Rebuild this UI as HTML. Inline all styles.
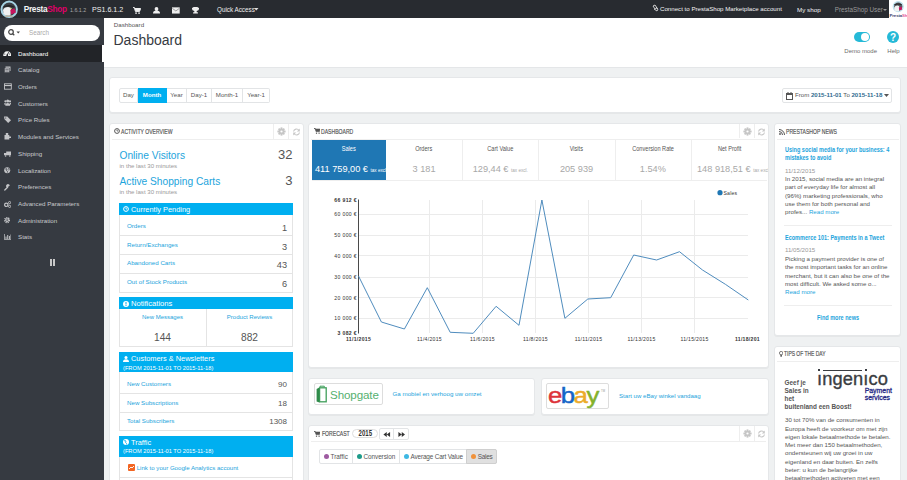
<!DOCTYPE html>
<html><head><meta charset="utf-8">
<style>
*{margin:0;padding:0;box-sizing:border-box}
html,body{width:907px;height:480px;overflow:hidden;background:#eff1f2;font-family:"Liberation Sans",sans-serif;color:#555}
.a{position:absolute;white-space:nowrap}
.panel{position:absolute;background:#fff;border:1px solid #e5e7e9;border-radius:3px;box-shadow:0 1px 0 rgba(0,0,0,.04)}
.cond{display:inline-block;transform:scaleX(.67);transform-origin:0 50%;font-size:7.6px;-webkit-text-stroke:.2px #555;color:#555}
.cnd{display:inline-block;transform:scaleX(.69);transform-origin:0 50%;font-weight:bold}
.cc{display:inline-block;transform:scaleX(.8);transform-origin:50% 50%}
.hl{position:absolute;height:1px;background:#eee}
.vl{position:absolute;width:1px;background:#eee}
.lnk{color:#1ca4dc}
.si{position:absolute;left:18px;font-size:6.2px;color:#c9cacd;line-height:8px;white-space:nowrap}
.tb{position:absolute;top:4px;font-size:6.4px;color:#e6e6e6;line-height:9px;white-space:nowrap}
.btn{position:absolute;top:88px;height:15px;border:1px solid #e2e4e6;border-left:none;font-size:6.1px;color:#555;line-height:11.8px;text-align:center;background:#fff}
.pt{position:absolute;font-size:7px;color:#555;line-height:9px;white-space:nowrap}
.bh{position:absolute;left:119px;width:174px;background:#00aff0}
.bt{position:absolute;left:131px;font-size:7.4px;color:#fff;line-height:9px;white-space:nowrap}
.bs{position:absolute;left:123px;font-size:5.7px;color:#fff;line-height:7px;white-space:nowrap}
.row{position:absolute;left:119px;width:174px;border:1px solid #e4e4e4;border-top:none}
.rl{position:absolute;left:7px;font-size:6.2px;color:#1ca4dc;line-height:8px;white-space:nowrap}
.rn{position:absolute;right:5px;font-size:9.2px;color:#555;line-height:10px}
.tab{position:absolute;top:140px;height:40px;width:76px;border-right:1px solid #eee;text-align:center}
.tl{position:absolute;left:-10px;right:-10px;top:4.5px;font-size:7px;color:#555;line-height:8px}
.tv{position:absolute;left:-10px;right:-10px;top:23.5px;font-size:9.2px;color:#a8a8a8;line-height:11px;white-space:nowrap}
.tv small{font-size:4.6px}
.nt{position:absolute;left:785px;font-size:6.15px;color:#555;line-height:8.3px;white-space:nowrap}
.gear{position:absolute;width:8px;height:8px}
</style></head><body>
<!-- frame -->
<div class="a" style="left:0;top:0;width:907px;height:18px;background:#282b30"></div>
<div class="a" style="left:0;top:18px;width:104px;height:462px;background:#363a41"></div>
<div class="a" style="left:104px;top:18px;width:803px;height:50px;background:#fff;border-bottom:1px solid #e4e6e8"></div>

<!-- TOP BAR -->
<svg class="a" style="left:0;top:0" width="20" height="18" viewBox="0 0 20 18">
 <circle cx="9.2" cy="9.3" r="7.7" fill="#3c3f44" stroke="#a6d3e3" stroke-width="2"/>
 <path d="M3.5 6.5 Q9 3.5 14 6.5 L14 7.5 Q9 5.5 3.5 7.5Z" fill="#222"/>
 <path d="M3 10 Q4 7 8 7 Q11 7 11 9.5 L10.5 15.5 Q6 16.5 3.5 14Z" fill="#f0f0f0"/>
 <path d="M10 7.5 L12 8.5 L10.5 10Z" fill="#f3d98a"/>
 <path d="M10.3 10 L14.5 8.2 L16 12.5 L11 14.5Z" fill="#c8155f"/>
 <path d="M5 16.2 h8" stroke="#b9ae96" stroke-width="1.2"/>
</svg>
<div class="tb" style="left:23.7px;top:5px;font-size:8.3px;font-weight:bold;letter-spacing:-.3px"><span style="color:#f4f4f4">Presta</span><span style="color:#df0067">Shop</span></div>
<div class="tb" style="left:70px;top:6px;font-size:5.3px;color:#aaa">1.6.1.2</div>
<div class="tb" style="left:92px;top:6px;font-size:7.1px;color:#f0f0f0">PS1.6.1.2</div>
<svg class="a" style="left:133px;top:6.5px" width="8" height="7" viewBox="0 0 8 7"><path d="M0 .6h1.4l1 3.8h4.2l1-2.9H2" fill="#eee" stroke="#eee" stroke-width="1"/><rect x="2.3" y="5.4" width="1.5" height="1.5" fill="#eee"/><rect x="5.3" y="5.4" width="1.5" height="1.5" fill="#eee"/></svg>
<svg class="a" style="left:152.7px;top:6.8px" width="7" height="7" viewBox="0 0 7 7"><circle cx="3.5" cy="2" r="1.9" fill="#eee"/><path d="M0 6.4 Q0 3.6 3.5 3.6 Q7 3.6 7 6.4Z" fill="#eee"/></svg>
<svg class="a" style="left:172.4px;top:7px" width="8" height="7" viewBox="0 0 8 6.3"><rect x="0" y="0" width="7.7" height="6.2" fill="#eee"/><path d="M.3 1 L3.85 3.6 L7.4 1" fill="none" stroke="#8a8a8a" stroke-width=".8"/></svg>
<svg class="a" style="left:192px;top:7px" width="7" height="6.5" viewBox="0 0 7 6.5"><path d="M1.2 0h4.6v.8H7v1.2q0 1.6-2.3 2v1.2h1.2V6.5H1.1V5.2h1.2V4Q0 3.6 0 2V.8h1.2z" fill="#eee"/></svg>
<div class="tb" style="left:217px;top:5.2px;font-size:6.3px;color:#eee">Quick Access</div>
<svg class="a" style="left:254px;top:8.3px" width="4.5" height="3"><path d="M0 0h4.5L2.25 2.5z" fill="#ddd"/></svg>
<svg class="a" style="left:652px;top:4px" width="7" height="8" viewBox="0 0 7 8"><path d="M1 2 L3 1 L5 4 L3 5Z M4 3 L6 5 L5 7 L2 5" fill="none" stroke="#ddd" stroke-width=".9"/></svg>
<div class="tb" style="left:660px;top:4.4px;font-size:6.15px;color:#f2f2f2">Connect to PrestaShop Marketplace account</div>
<div class="tb" style="left:797px;top:4.6px;font-size:6.25px;color:#f2f2f2">My shop</div>
<div class="tb" style="left:834.8px;top:4.6px;font-size:6.3px;color:#999">PrestaShop User</div>
<svg class="a" style="left:883.2px;top:8.5px" width="4" height="2"><path d="M0 0h4L2 2z" fill="#999"/></svg>
<div class="a" style="left:889px;top:0;width:18px;height:18px;background:#fff"></div>
<svg class="a" style="left:889px;top:0" width="18" height="18" viewBox="0 0 18 18">
 <circle cx="9.2" cy="6.6" r="4.9" fill="#55585d" stroke="#bfe2ee" stroke-width="1.4"/>
 <path d="M5 4.5 Q9 2.5 13 4.5 L13 5 Q9 3.8 5 5Z" fill="#222"/>
 <path d="M5.2 8 Q5.5 5.5 8.5 5.5 Q10.5 5.5 10.5 7.5 L10 11 Q7.5 11.8 5.8 10.5Z" fill="#f2f2f2"/>
 <path d="M9.8 7.6 L12.6 6.4 L13.2 9.6 L10.4 10.5Z" fill="#c8155f"/>
 <text x="0.5" y="16.8" font-size="4.3" font-family="Liberation Sans" font-weight="bold" letter-spacing="-.1"><tspan fill="#3b3e6e">Presta</tspan><tspan fill="#e8609a">Shop</tspan></text>
</svg>

<!-- SIDEBAR -->
<div class="a" style="left:4px;top:25px;width:96px;height:15.5px;background:#fff;border-radius:8px"></div>
<svg class="a" style="left:8px;top:29px" width="12" height="8" viewBox="0 0 12 8"><circle cx="3" cy="3" r="2.3" fill="none" stroke="#444" stroke-width="1.2"/><path d="M4.6 4.6 L6.3 6.3" stroke="#444" stroke-width="1.3"/><path d="M8.5 2.5h3.5L10.25 4.5z" fill="#444"/></svg>
<div class="a" style="left:29px;top:29.2px;font-size:6.3px;color:#aaa;line-height:8px">Search</div>
<div class="a" style="left:0;top:45px;width:102px;height:17px;background:#222428"></div><div class="a" style="left:102px;top:45px;width:2px;height:17px;background:#fff"></div>
<div class="si" style="top:49.5px;color:#fff">Dashboard</div>
<div class="si" style="top:66.2px">Catalog</div>
<div class="si" style="top:83px">Orders</div>
<div class="si" style="top:99.5px">Customers</div>
<div class="si" style="top:116.3px">Price Rules</div>
<div class="si" style="top:133.1px">Modules and Services</div>
<div class="si" style="top:149.9px">Shipping</div>
<div class="si" style="top:166.5px">Localization</div>
<div class="si" style="top:183.1px">Preferences</div>
<div class="si" style="top:199.9px">Advanced Parameters</div>
<div class="si" style="top:216.6px">Administration</div>
<div class="si" style="top:233.1px">Stats</div>
<div class="a" style="left:49.5px;top:259px;width:2.5px;height:7px;background:#c8c8c8"></div>
<div class="a" style="left:52.7px;top:259px;width:2.5px;height:7px;background:#c8c8c8"></div>
<svg class="a" style="left:2.7px;top:50px" width="8.5" height="6.5" viewBox="0 0 8.5 6.5"><path d="M0.3 6 A4 4 0 1 1 8.2 6Z" fill="#f4f4f4"/><path d="M4.25 5.2 L5.6 2.2" stroke="#222428" stroke-width=".9"/><circle cx="4.25" cy="5.2" r=".9" fill="#222428"/><circle cx="1.8" cy="4" r=".5" fill="#222428"/><circle cx="6.7" cy="4" r=".5" fill="#222428"/></svg>
<svg class="a" style="left:3.5px;top:66.0px" width="7" height="7" viewBox="0 0 7 7"><path d="M1.5 0.5h5v4.5h-5z" fill="#c3c4c7"/><path d="M0.5 2h5v4.5h-5z" fill="#c3c4c7" stroke="#363a41" stroke-width=".5"/><path d="M1.3 3.5h3.4M1.3 5h3.4" stroke="#363a41" stroke-width=".5"/></svg>
<svg class="a" style="left:3.5px;top:82.5px" width="8" height="7" viewBox="0 0 8 7"><rect x=".5" y=".8" width="6.8" height="5.4" fill="none" stroke="#c3c4c7" stroke-width=".9"/><rect x=".3" y="2" width="7.2" height="1.1" fill="#c3c4c7"/></svg>
<svg class="a" style="left:3.5px;top:99.2px" width="7.5" height="7" viewBox="0 0 7.5 7"><circle cx="3.7" cy="2" r="1.5" fill="#c3c4c7"/><circle cx="1.4" cy="2.3" r="1.1" fill="#c3c4c7"/><circle cx="6" cy="2.3" r="1.1" fill="#c3c4c7"/><path d="M1.3 6.8 Q1.3 3.9 3.7 3.9 Q6.1 3.9 6.1 6.8Z M0 5.5 Q0 3.8 1.5 3.8 L1.8 5.5Z M7.4 5.5 Q7.4 3.8 5.9 3.8 L5.6 5.5Z" fill="#c3c4c7"/></svg>
<svg class="a" style="left:3.5px;top:116.0px" width="7.5" height="7" viewBox="0 0 7.5 7"><path d="M0 .5 L3.3 .5 L7 4.2 L4.2 7 L0.5 3.3Z" fill="#c3c4c7"/><circle cx="1.7" cy="2" r=".6" fill="#363a41"/></svg>
<svg class="a" style="left:3.5px;top:132.5px" width="7" height="7" viewBox="0 0 7 7"><path d="M1.8 0h2.4v2h-2.4z M0.5 2h4.8v4.5H0.5z M5.3 3.5h1.7v1.5H5.3z" fill="#c3c4c7"/></svg>
<svg class="a" style="left:3.5px;top:150.5px" width="7.5" height="6" viewBox="0 0 7.5 6"><path d="M2.2 0.5h5.3v3.8H2.2z M0 2h2.2v2.3H0z" fill="#c3c4c7"/><circle cx="1.6" cy="5" r=".8" fill="#c3c4c7"/><circle cx="5.8" cy="5" r=".8" fill="#c3c4c7"/></svg>
<svg class="a" style="left:4px;top:167.05px" width="6.5" height="6.5" viewBox="0 0 6.5 6.5"><circle cx="3.2" cy="3.2" r="3" fill="#c3c4c7"/><path d="M1.2 2.2 Q2 1.2 3 2 L2.6 3.6 Q3.8 4.2 3.4 5.6 M4.6 1 Q5.5 2.2 4.8 3.4" stroke="#363a41" stroke-width=".8" fill="none"/></svg>
<svg class="a" style="left:4px;top:184.25px" width="6.5" height="6.5" viewBox="0 0 6.5 6.5"><path d="M0.8 6 L3.6 3.2" stroke="#c3c4c7" stroke-width="1.3" stroke-linecap="round"/><path d="M3 3.6 A1.9 1.9 0 1 1 5.8 1.6 L4.6 2.6Z" fill="#c3c4c7"/></svg>
<svg class="a" style="left:3.5px;top:200.7px" width="7" height="7" viewBox="0 0 7 7"><circle cx="2.3" cy="3.8" r="1.7" fill="none" stroke="#c3c4c7" stroke-width="1.2"/><circle cx="5.6" cy="1.6" r="1.1" fill="none" stroke="#c3c4c7" stroke-width=".9"/><circle cx="5.6" cy="5.4" r="1.1" fill="none" stroke="#c3c4c7" stroke-width=".9"/></svg>
<svg class="a" style="left:4px;top:217.4px" width="6.2" height="6.2" viewBox="0 0 6.2 6.2"><circle cx="3.1" cy="3.1" r="2.3" fill="none" stroke="#c3c4c7" stroke-width="1.6" stroke-dasharray="1.05 .75"/><circle cx="3.1" cy="3.1" r="1.9" fill="#c3c4c7"/><circle cx="3.1" cy="3.1" r=".8" fill="#363a41"/></svg>
<svg class="a" style="left:3.5px;top:234.2px" width="7.5" height="6" viewBox="0 0 7.5 6"><path d="M.4 0v5.6h7" fill="none" stroke="#c3c4c7" stroke-width=".8"/><path d="M1.5 5V2.5h1v2.5z M3.2 5V1h1v4z M4.9 5V2h1v3z M6.5 5V.5h.9V5z" fill="#c3c4c7"/></svg>
<!-- PAGE HEAD -->
<div class="a" style="left:113.8px;top:20.8px;font-size:6.2px;color:#555;line-height:8px">Dashboard</div>
<div class="a" style="left:113.5px;top:32px;font-size:14px;color:#363a41;line-height:17px">Dashboard</div>
<div class="a" style="left:854px;top:31.5px;width:16px;height:10px;border-radius:5px;background:#25b9d7"></div>
<div class="a" style="left:861px;top:32.5px;width:8px;height:8px;border-radius:4px;background:#fff"></div>
<div class="a" style="left:844.3px;top:47px;font-size:6px;color:#6c6c6c;line-height:8px">Demo mode</div>
<svg class="a" style="left:887px;top:30.5px" width="12" height="12" viewBox="0 0 12 12"><circle cx="6" cy="6" r="6" fill="#25b9d7"/><text x="6" y="9.5" font-size="10" font-weight="bold" fill="#fff" text-anchor="middle" font-family="Liberation Sans">?</text></svg>
<div class="a" style="left:887.3px;top:47px;font-size:6px;color:#6c6c6c;line-height:8px">Help</div>
<!-- FILTER PANEL -->
<div class="panel" style="left:109px;top:77px;width:792px;height:36px"></div>
<div class="btn" style="left:119px;width:19px;border-left:1px solid #e2e4e6;border-radius:2px 0 0 2px">Day</div>
<div class="btn" style="left:138px;width:29px;background:#00aff0;border-color:#00aff0;color:#fff;font-weight:bold">Month</div>
<div class="btn" style="left:167px;width:20px">Year</div>
<div class="btn" style="left:187px;width:25px">Day-1</div>
<div class="btn" style="left:212px;width:31px">Month-1</div>
<div class="btn" style="left:243px;width:27px;border-radius:0 2px 2px 0">Year-1</div>
<div class="btn" style="left:782px;width:110px;border-left:1px solid #e2e4e6;border-radius:2px;text-align:left;padding-left:12px;color:#555;font-size:6.1px">From <b style="color:#2f6c8f">2015-11-01</b> To <b style="color:#2f6c8f">2015-11-18</b></div>
<svg class="a" style="left:786px;top:91.5px" width="7" height="8" viewBox="0 0 7 8"><rect x=".5" y="1.5" width="6" height="6" fill="none" stroke="#555" stroke-width="1"/><rect x="0" y="1" width="7" height="2" fill="#555"/><path d="M2 0v2M5 0v2" stroke="#555"/></svg>
<svg class="a" style="left:884px;top:94px" width="5" height="3"><path d="M0 0h5L2.5 3z" fill="#555"/></svg>

<!-- ACTIVITY PANEL -->
<div class="panel" style="left:109px;top:123px;width:195px;height:370px"></div>
<div class="hl" style="left:112px;top:139px;width:188px"></div>
<div class="vl" style="left:273px;top:124px;height:15px"></div>
<div class="vl" style="left:288px;top:124px;height:15px"></div>
<svg class="a" style="left:114px;top:128px" width="6" height="6" viewBox="0 0 6 6"><circle cx="3" cy="3" r="2.4" fill="none" stroke="#555" stroke-width="1"/><path d="M3 1.5V3h1.2" fill="none" stroke="#555" stroke-width=".8"/></svg>
<div class="pt" style="left:121px;top:127px"><span class="cond">ACTIVITY OVERVIEW</span></div>
<svg class="a" style="left:277.0px;top:126.8px" width="9" height="9" viewBox="0 0 9 9"><g fill="#c6c6c6" transform="translate(4.5 4.5)"><rect x="-.9" y="-4.1" width="1.8" height="8.2"/><rect x="-.9" y="-4.1" width="1.8" height="8.2" transform="rotate(45)"/><rect x="-.9" y="-4.1" width="1.8" height="8.2" transform="rotate(90)"/><rect x="-.9" y="-4.1" width="1.8" height="8.2" transform="rotate(135)"/><circle r="3"/></g><circle cx="4.5" cy="4.5" r="1.1" fill="#fff"/></svg>
<svg class="a" style="left:291.5px;top:127.5px" width="9" height="8" viewBox="0 0 9 8"><path d="M1.5 3.5 A3 3 0 0 1 7 2.5 M7.5 4.5 A3 3 0 0 1 2 5.5" fill="none" stroke="#c8c8c8" stroke-width="1.1"/><path d="M7.8 0.5v3h-3z M1.2 7.5v-3h3z" fill="#c8c8c8"/></svg>

<div class="a lnk" style="left:119.5px;top:148.5px;font-size:10.2px;line-height:13px">Online Visitors</div>
<div class="a" style="left:119.5px;top:161.5px;font-size:6.1px;color:#999;line-height:8px">in the last 30 minutes</div>
<div class="a lnk" style="left:119.5px;top:174.5px;font-size:10.2px;line-height:13px">Active Shopping Carts</div>
<div class="a" style="left:119.5px;top:187.5px;font-size:6.1px;color:#999;line-height:8px">in the last 30 minutes</div>
<div class="a" style="right:614.5px;top:147px;font-size:13px;color:#555;line-height:16px">32</div>
<div class="a" style="right:614.5px;top:173px;font-size:13px;color:#555;line-height:16px">3</div>

<div class="bh" style="top:203px;height:12px"></div>
<svg class="a" style="left:122.8px;top:206px" width="6" height="6" viewBox="0 0 6 6"><circle cx="3" cy="3" r="2.4" fill="none" stroke="#fff" stroke-width="1"/><path d="M3 1.5V3h1.2" fill="none" stroke="#fff" stroke-width=".8"/></svg>
<div class="bt" style="top:204.5px">Currently Pending</div>
<div class="row" style="top:215px;height:21px"><div class="rl" style="top:6.5px">Orders</div><div class="rn" style="top:7.5px">1</div></div>
<div class="row" style="top:236px;height:19px"><div class="rl" style="top:4.5px">Return/Exchanges</div><div class="rn" style="top:5.5px">3</div></div>
<div class="row" style="top:255px;height:19px"><div class="rl" style="top:4.3px">Abandoned Carts</div><div class="rn" style="top:5.3px">43</div></div>
<div class="row" style="top:274px;height:19px"><div class="rl" style="top:3.6px">Out of Stock Products</div><div class="rn" style="top:4.6px">6</div></div>

<div class="bh" style="top:297px;height:12px"></div>
<svg class="a" style="left:122.8px;top:300.5px" width="6" height="6" viewBox="0 0 6 6"><circle cx="3" cy="3" r="3" fill="#fff"/><rect x="2.5" y="1" width="1" height="2.5" fill="#00aff0"/><rect x="2.5" y="4" width="1" height="1" fill="#00aff0"/></svg>
<div class="bt" style="top:299px;font-size:7.6px">Notifications</div>
<div class="a" style="left:119px;top:309px;width:174px;height:38px;border:1px solid #e4e4e4;border-top:none"></div>
<div class="vl" style="left:206px;top:309px;height:38px;background:#e4e4e4"></div>
<div class="a lnk" style="left:119px;width:87px;text-align:center;top:313px;font-size:6px;line-height:8px">New Messages</div>
<div class="a lnk" style="left:206px;width:87px;text-align:center;top:313px;font-size:6.07px;line-height:8px">Product Reviews</div>
<div class="a" style="left:119px;width:87px;text-align:center;top:331.5px;font-size:10.2px;color:#555;line-height:12px">144</div>
<div class="a" style="left:206px;width:87px;text-align:center;top:331.5px;font-size:10.2px;color:#555;line-height:12px">882</div>

<div class="bh" style="top:352px;height:20px"></div>
<svg class="a" style="left:122.8px;top:355.5px" width="6" height="6" viewBox="0 0 6 6"><circle cx="3" cy="1.6" r="1.5" fill="#fff"/><path d="M0 6 Q0 3.2 3 3.2 Q6 3.2 6 6Z" fill="#fff"/></svg>
<div class="bt" style="top:354px">Customers &amp; Newsletters</div>
<div class="bs" style="top:364.5px">(FROM 2015-11-01 TO 2015-11-18)</div>
<div class="row" style="top:372px;height:22px"><div class="rl" style="top:7.5px">New Customers</div><div class="rn" style="top:7.5px;font-size:8px">90</div></div>
<div class="row" style="top:394px;height:19px"><div class="rl" style="top:4.5px">New Subscriptions</div><div class="rn" style="top:4.5px;font-size:8px">18</div></div>
<div class="row" style="top:413px;height:18px"><div class="rl" style="top:4.3px">Total Subscribers</div><div class="rn" style="top:4.3px;font-size:8px">1308</div></div>

<div class="bh" style="top:436px;height:21px"></div>
<svg class="a" style="left:122.8px;top:439px" width="6" height="6" viewBox="0 0 6 6"><circle cx="3" cy="3" r="3" fill="#fff"/><path d="M1 2 Q2 1 3 2 L2.5 3.5 Q4 4 3.5 5.5" stroke="#00aff0" stroke-width=".8" fill="none"/></svg>
<div class="bt" style="top:437.5px">Traffic</div>
<div class="bs" style="top:447.5px">(FROM 2015-11-01 TO 2015-11-18)</div>
<div class="row" style="top:457px;height:21px"><svg class="a" style="left:8px;top:7px" width="7" height="7" viewBox="0 0 7 7"><rect width="7" height="7" rx="1" fill="#f26522"/><path d="M1 5 L3 3 L4 4 L6 2" stroke="#fff" stroke-width=".9" fill="none"/></svg><div class="rl" style="left:16.7px;top:6.5px;font-size:6.1px">Link to your Google Analytics account</div></div>
<div class="row" style="top:478px;height:10px"></div>
<!-- DASHBOARD PANEL -->
<div class="panel" style="left:308px;top:123px;width:461px;height:245px"></div>
<div class="hl" style="left:311px;top:139px;width:456px"></div>
<div class="vl" style="left:739px;top:124px;height:14px"></div>
<div class="vl" style="left:754px;top:124px;height:14px"></div>
<svg class="a" style="left:313.8px;top:128px" width="6.5" height="6" viewBox="0 0 6.5 6"><path d="M0 .4h1.2l.8 3.2h3.4l.9-2.5H1.6z" fill="#555" stroke="#555" stroke-width=".7" stroke-linejoin="round"/><rect x="1.9" y="4.6" width="1.2" height="1.2" fill="#555"/><rect x="4.5" y="4.6" width="1.2" height="1.2" fill="#555"/></svg>
<div class="pt" style="left:321px;top:127px"><span class="cond">DASHBOARD</span></div>
<svg class="a" style="left:742.5px;top:126.8px" width="9" height="9" viewBox="0 0 9 9"><g fill="#c6c6c6" transform="translate(4.5 4.5)"><rect x="-.9" y="-4.1" width="1.8" height="8.2"/><rect x="-.9" y="-4.1" width="1.8" height="8.2" transform="rotate(45)"/><rect x="-.9" y="-4.1" width="1.8" height="8.2" transform="rotate(90)"/><rect x="-.9" y="-4.1" width="1.8" height="8.2" transform="rotate(135)"/><circle r="3"/></g><circle cx="4.5" cy="4.5" r="1.1" fill="#fff"/></svg>
<svg class="a" style="left:757px;top:127.5px" width="9" height="8" viewBox="0 0 9 8"><path d="M1.5 3.5 A3 3 0 0 1 7 2.5 M7.5 4.5 A3 3 0 0 1 2 5.5" fill="none" stroke="#c8c8c8" stroke-width="1.1"/><path d="M7.8 0.5v3h-3z M1.2 7.5v-3h3z" fill="#c8c8c8"/></svg>


<div class="hl" style="left:312px;top:180px;width:455px"></div>
<div class="vl" style="left:462px;top:140px;height:40px"></div><div class="vl" style="left:538px;top:140px;height:40px"></div><div class="vl" style="left:615px;top:140px;height:40px"></div><div class="vl" style="left:691px;top:140px;height:40px"></div>
<div class="tab" style="left:312px;background:#1f77b4;border-right:none;width:74px;overflow:hidden;top:140px"><div class="tl" style="color:#fff"><span class="cc">Sales</span></div><div class="tv" style="color:#fff;left:3px;right:auto;text-align:left">411 759,00 € <small>tax excl.</small></div></div>
<div class="tab" style="left:386px;border-right:none"><div class="tl"><span class="cc">Orders</span></div><div class="tv">3 181</div></div>
<div class="tab" style="left:462.3px;border-right:none"><div class="tl"><span class="cc">Cart Value</span></div><div class="tv">129,44 € <small>tax excl.</small></div></div>
<div class="tab" style="left:538.5px;border-right:none"><div class="tl"><span class="cc">Visits</span></div><div class="tv">205 939</div></div>
<div class="tab" style="left:614.8px;border-right:none"><div class="tl"><span class="cc">Conversion Rate</span></div><div class="tv">1.54%</div></div>
<div class="tab" style="left:691px;border-right:none;overflow:hidden;width:77px"><div class="tl"><span class="cc">Net Profit</span></div><div class="tv" style="left:6px;right:auto;text-align:left">148 918,51 € <small>tax excl.</small></div></div>

<svg class="a" style="left:309px;top:185px" width="459" height="175" viewBox="309 185 459 175">
 <g stroke="#ebebeb" stroke-width="1" fill="none">
  <path d="M359 214.5H748M359 235.5H748M359 255.5H748M359 277.5H748M359 297.5H748M359 318.5H748"/>
  <path d="M429.5 200V333M482.5 200V333M535.5 200V333M588.5 200V333M641.5 200V333M694.5 200V333"/>
 </g>
 <path d="M358.5 199.5V333.5" stroke="#4a4a4a" stroke-width="1"/>
 <polyline fill="none" stroke="#4686b9" stroke-width=".95" stroke-linejoin="round" points="358.5,276 381.4,322 404.4,329 427.3,287.7 450.2,332.3 473.2,333.3 496.1,306.3 519,325.3 541.9,200 564.9,318.3 587.8,299 610.7,297.7 633.7,255 656.6,260 679.5,251.7 702.5,270 725.4,284.3 748.3,300"/>
 <g font-family="Liberation Sans" font-size="5.1" fill="#333" text-anchor="end" letter-spacing=".35">
  <text x="357" y="201.8" font-weight="bold">66 912 €</text>
  <text x="357" y="216.3">60 000 €</text>
  <text x="357" y="237.2">50 000 €</text>
  <text x="357" y="257.9">40 000 €</text>
  <text x="357" y="279.3">30 000 €</text>
  <text x="357" y="299.7">20 000 €</text>
  <text x="357" y="320.4">10 000 €</text>
  <text x="357" y="335" font-weight="bold">3 082 €</text>
 </g>
 <g font-family="Liberation Sans" font-size="5.1" fill="#333" text-anchor="middle" letter-spacing=".3">
  <text x="358.5" y="340.5" font-weight="bold">11/1/2015</text>
  <text x="429.5" y="340.5">11/4/2015</text>
  <text x="482.5" y="340.5">11/6/2015</text>
  <text x="535.5" y="340.5">11/8/2015</text>
  <text x="588.5" y="340.5">11/11/2015</text>
  <text x="641.5" y="340.5">11/13/2015</text>
  <text x="694.5" y="340.5">11/15/2015</text>
  <text x="760" y="340.5" font-weight="bold" text-anchor="end">11/18/201</text>
 </g>
 <circle cx="720" cy="192.7" r="2.6" fill="#1f77b4"/>
 <text x="723.5" y="194.5" font-family="Liberation Sans" font-size="5.1" fill="#333" letter-spacing=".2">Sales</text>
</svg>
<!-- SHOPGATE -->
<div class="panel" style="left:308px;top:378px;width:227px;height:37px"></div>
<div class="a" style="left:314px;top:383px;width:69px;height:22px;border:1px solid #ddd;border-radius:2px;background:#fff"></div>
<svg class="a" style="left:316px;top:385px" width="11" height="18" viewBox="0 0 11 18"><path d="M4 2.3V1.2h4.3v1.1" fill="none" stroke="#3f9e5a" stroke-width="1"/><rect x="3.6" y="2.8" width="6.6" height="14" fill="none" stroke="#3f9e5a" stroke-width="1.3"/><path d="M3.4 2.4 L.6 4 V16.6 L3.4 17.4Z" fill="#2f8a4a"/></svg>
<div class="a" style="left:330px;top:387.5px;font-size:11.6px;color:#55b070;line-height:14px;letter-spacing:-.1px">Shopgate</div>
<div class="a lnk" style="left:392.5px;top:390px;font-size:6.2px;line-height:8px">Ga mobiel en verhoog uw omzet</div>

<!-- EBAY -->
<div class="panel" style="left:541px;top:378px;width:228px;height:37px"></div>
<div class="a" style="left:546px;top:383px;width:63px;height:26px;border:1px solid #ddd;border-radius:2px;background:#fff"></div>
<div class="a" style="left:548.3px;top:383.5px;font-size:22px;line-height:24px;letter-spacing:-1.3px;transform:scaleX(1.17);transform-origin:0 0;"><span style="color:#dd343c;-webkit-text-stroke:.45px #dd343c">e</span><span style="color:#1565c8;-webkit-text-stroke:.45px #1565c8">b</span><span style="color:#ecab2a;-webkit-text-stroke:.45px #ecab2a">a</span><span style="color:#84b22c;-webkit-text-stroke:.45px #84b22c">y</span></div>
<div class="a" style="left:601px;top:389.5px;font-size:2.8px;color:#999;line-height:3px">TM</div>
<div class="a lnk" style="left:619px;top:391.5px;font-size:6.1px;line-height:8px">Start uw eBay winkel vandaag</div>

<!-- FORECAST -->
<div class="panel" style="left:308px;top:425px;width:461px;height:70px"></div>
<div class="hl" style="left:311px;top:441px;width:455px"></div>
<div class="vl" style="left:739px;top:426px;height:15px"></div>
<div class="vl" style="left:754px;top:426px;height:15px"></div>
<svg class="a" style="left:313.5px;top:430.5px" width="6.5" height="6" viewBox="0 0 6.5 6"><path d="M0 .4h1.2l.8 3.2h3.4l.9-2.5H1.6z" fill="#555" stroke="#555" stroke-width=".7" stroke-linejoin="round"/><rect x="1.9" y="4.6" width="1.2" height="1.2" fill="#555"/><rect x="4.5" y="4.6" width="1.2" height="1.2" fill="#555"/></svg>
<div class="pt" style="left:321.5px;top:429px"><span class="cond">FORECAST</span></div>
<div class="a" style="left:352px;top:429px;width:26px;height:9px;border:1px solid #ddd;border-radius:5px"></div>
<div class="a" style="left:352px;top:428px;width:26px;font-size:8.4px;font-weight:bold;color:#333;line-height:11px;text-align:center"><span class="cc" style="transform:scaleX(.72)">2015</span></div>
<div class="a" style="left:379px;top:428px;width:30px;height:12px;border:1px solid #e2e4e6;border-radius:2px"></div>
<div class="vl" style="left:393px;top:428px;height:12px;background:#e2e4e6"></div>
<svg class="a" style="left:383px;top:432px" width="7.5" height="5" viewBox="0 0 8 6"><path d="M4 0v6L0 3z M8 0v6L4 3z" fill="#333"/></svg>
<svg class="a" style="left:397.5px;top:432px" width="7.5" height="5" viewBox="0 0 8 6"><path d="M0 0v6l4-3z M4 0v6l4-3z" fill="#333"/></svg>
<svg class="a" style="left:742.5px;top:428.8px" width="9" height="9" viewBox="0 0 9 9"><g fill="#c6c6c6" transform="translate(4.5 4.5)"><rect x="-.9" y="-4.1" width="1.8" height="8.2"/><rect x="-.9" y="-4.1" width="1.8" height="8.2" transform="rotate(45)"/><rect x="-.9" y="-4.1" width="1.8" height="8.2" transform="rotate(90)"/><rect x="-.9" y="-4.1" width="1.8" height="8.2" transform="rotate(135)"/><circle r="3"/></g><circle cx="4.5" cy="4.5" r="1.1" fill="#fff"/></svg>
<svg class="a" style="left:757px;top:429.5px" width="9" height="8" viewBox="0 0 9 8"><path d="M1.5 3.5 A3 3 0 0 1 7 2.5 M7.5 4.5 A3 3 0 0 1 2 5.5" fill="none" stroke="#c8c8c8" stroke-width="1.1"/><path d="M7.8 0.5v3h-3z M1.2 7.5v-3h3z" fill="#c8c8c8"/></svg>
<div class="a" style="left:319px;top:449px;width:178px;height:15px;border:1px solid #e2e4e6;border-radius:2px;background:#fff"></div>
<div class="vl" style="left:352px;top:449px;height:15px;background:#e2e4e6"></div>
<div class="vl" style="left:399px;top:449px;height:15px;background:#e2e4e6"></div>
<div class="a" style="left:466px;top:449px;width:31px;height:15px;background:#e0e0e0;border:1px solid #cfcfcf;border-radius:0 2px 2px 0"></div>
<div class="a" style="left:323.5px;top:454px;width:5px;height:5px;border-radius:50%;background:#9e5ba1"></div>
<div class="a" style="left:356.5px;top:454px;width:5px;height:5px;border-radius:50%;background:#1e9b8a"></div>
<div class="a" style="left:403.5px;top:454px;width:5px;height:5px;border-radius:50%;background:#3eb8e3"></div>
<div class="a" style="left:471px;top:454px;width:5px;height:5px;border-radius:50%;background:#f0923b"></div>
<div class="a" style="left:330.5px;top:452.5px;font-size:6.4px;color:#555;line-height:8px">Traffic</div>
<div class="a" style="left:363.5px;top:452.5px;font-size:6.4px;color:#555;line-height:8px;letter-spacing:-.07px">Conversion</div>
<div class="a" style="left:410.5px;top:452.5px;font-size:6.4px;color:#555;line-height:8px;letter-spacing:-.16px">Average Cart Value</div>
<div class="a" style="left:477.7px;top:452.5px;font-size:6.4px;color:#555;line-height:8px;letter-spacing:-.25px">Sales</div>

<!-- NEWS -->
<div class="panel" style="left:774px;top:123px;width:127px;height:213px"></div>
<div class="hl" style="left:777px;top:139px;width:122px"></div>
<svg class="a" style="left:779px;top:128.5px" width="6" height="6" viewBox="0 0 6 6"><circle cx="1" cy="5" r=".9" fill="#555"/><path d="M0 2.5A3.5 3.5 0 0 1 3.5 6M0 .5A5.5 5.5 0 0 1 5.5 6" fill="none" stroke="#555" stroke-width="1"/></svg>
<div class="pt" style="left:786px;top:127px"><span class="cond">PRESTASHOP NEWS</span></div>
<div class="a lnk" style="left:785px;top:146px;font-size:8px;line-height:8px"><span class="cnd">Using social media for your business: 4<br>mistakes to avoid</span></div>
<div class="nt" style="top:166.5px;color:#999">11/12/2015</div>
<div class="nt" style="top:175px">In 2015, social media are an integral<br>part of everyday life for almost all<br>(96%) marketing professionals, who<br>use them for both personal and<br>profes... <span class="lnk">Read more</span></div>
<div class="hl" style="left:784px;top:225px;width:108px"></div>
<div class="a lnk" style="left:785px;top:234px;font-size:8px;line-height:8px"><span class="cnd">Ecommerce 101: Payments in a Tweet</span></div>
<div class="nt" style="top:246.3px;color:#999">11/05/2015</div>
<div class="nt" style="top:255px">Picking a payment provider is one of<br>the most important tasks for an online<br>merchant, but it can also be one of the<br>most difficult. We asked some o...<br><span class="lnk">Read more</span></div>
<div class="hl" style="left:784px;top:305px;width:108px"></div>
<div class="a lnk" style="left:817px;top:313.5px;font-size:8px;line-height:8px"><span class="cnd">Find more news</span></div>

<!-- TIPS -->
<div class="panel" style="left:774px;top:346px;width:127px;height:150px"></div>
<div class="hl" style="left:777px;top:361px;width:122px"></div>
<svg class="a" style="left:778.8px;top:350.8px" width="4.3" height="6.3" viewBox="0 0 5 7"><circle cx="2.5" cy="2.3" r="2" fill="none" stroke="#555" stroke-width=".9"/><rect x="1.6" y="4.3" width="1.8" height="2.2" fill="#555"/></svg>
<div class="pt" style="left:784.3px;top:349px"><span class="cond" style="transform:scaleX(.65)">TIPS OF THE DAY</span></div>
<div class="a" style="left:823.3px;top:369.8px;width:38.5px;height:1.5px;background:#3a3d42"></div><div class="a" style="left:818.2px;top:369.3px;width:2.3px;height:2.2px;background:#3a3d42"></div><div class="a" style="left:864.8px;top:369.3px;width:2.3px;height:2.2px;background:#3a3d42"></div>
<div class="a" style="left:817px;top:367.2px;font-size:18.3px;color:#3a3d42;line-height:24px;letter-spacing:.1px;-webkit-text-stroke:.35px #3a3d42">&#305;ngen&#305;co</div>
<div class="a" style="left:864.7px;top:386.5px;font-size:6.9px;color:#262a85;line-height:7px;-webkit-text-stroke:.3px #262a85">Payment<br>services</div>
<div class="a" style="left:784.6px;top:378.5px;font-size:6.4px;color:#555;line-height:8.3px;font-weight:bold">Geef je<br>Sales in<br>het<br>buitenland een Boost!</div>
<div class="nt" style="top:416.3px">30 tot 70% van de consumenten in<br>Europa heeft de voorkeur om met zijn<br>eigen lokale betaalmethode te betalen.<br>Met meer dan 150 betaalmethoden,<br>ondersteunen wij uw groei in uw<br>eigenland en daar buiten. En zelfs<br>beter: u kun de belangrijke<br>betaalmethoden activeren met een</div>
</body></html>
